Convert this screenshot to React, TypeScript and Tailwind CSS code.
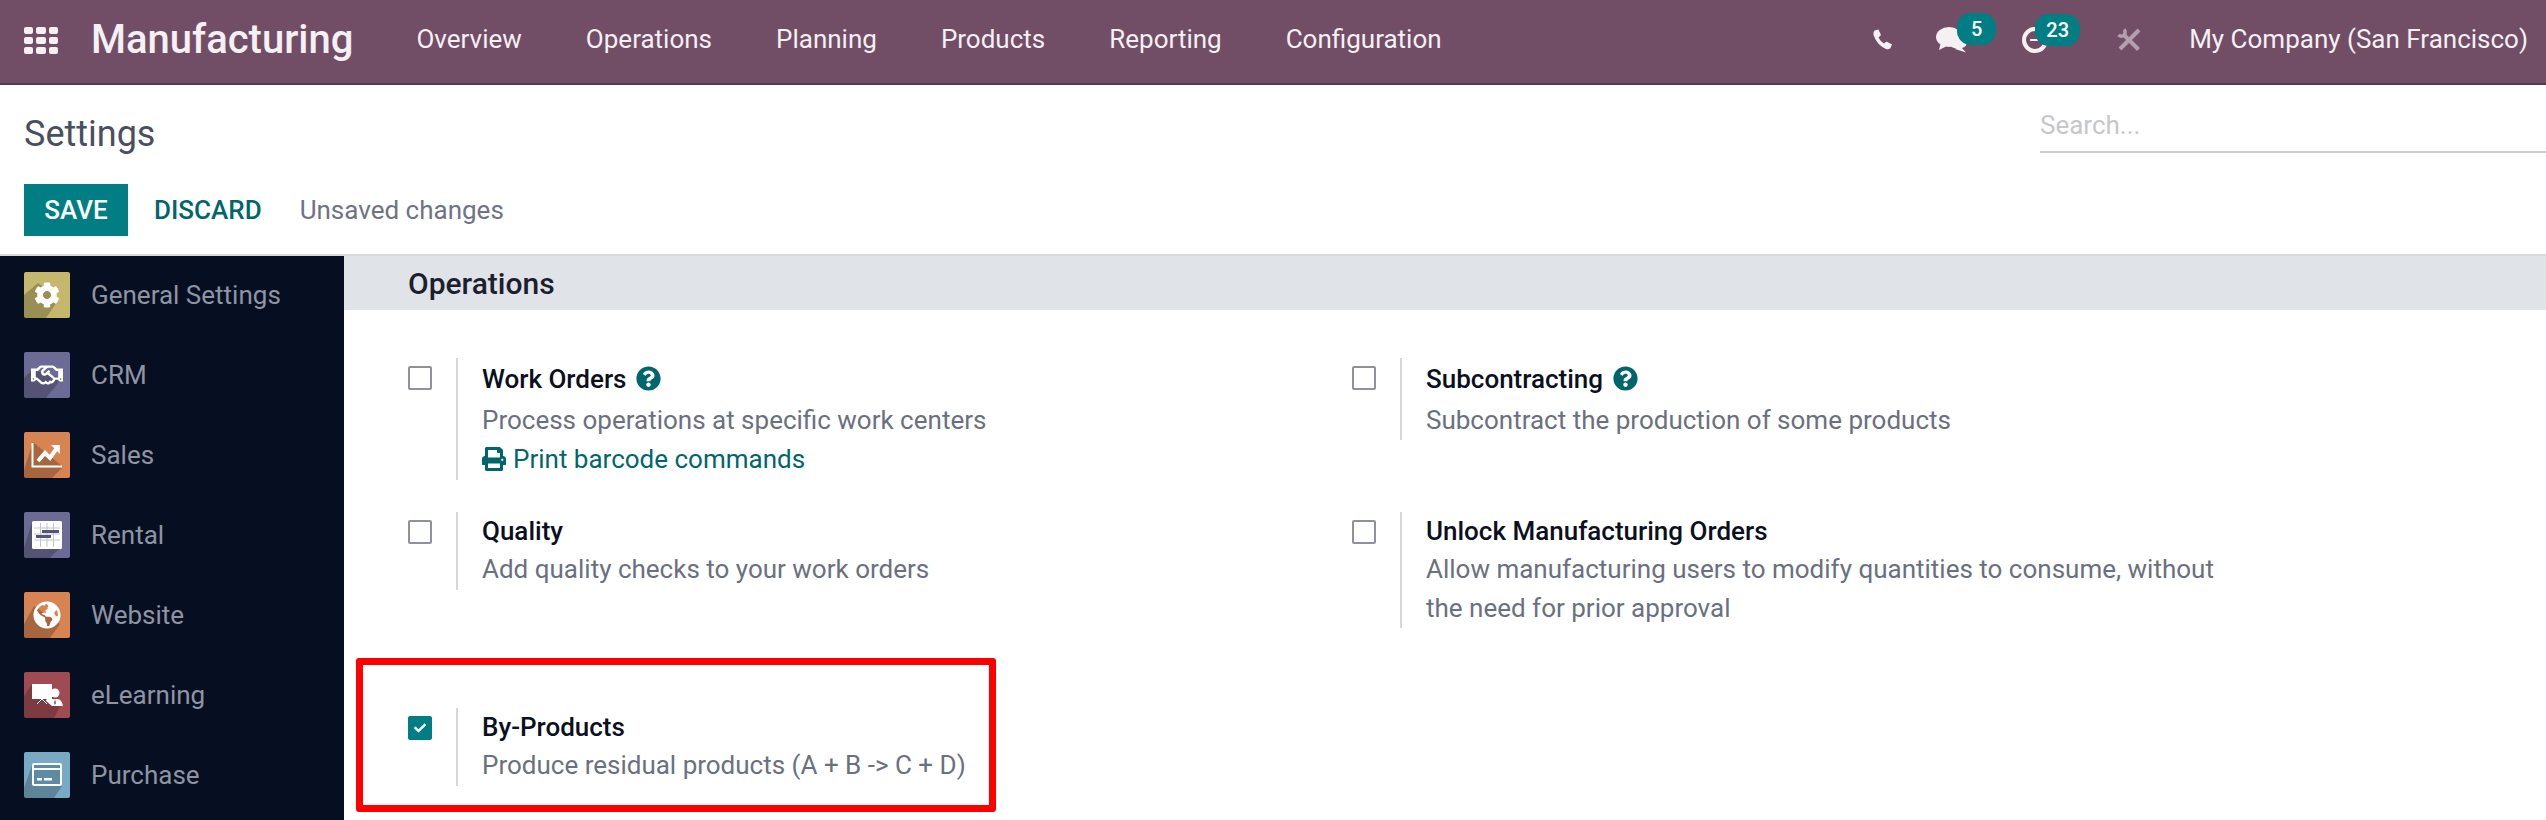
import React from 'react'
import { FaCog, FaRegHandshake, FaGlobeAmericas, FaPrint, FaQuestionCircle, FaCheck } from 'react-icons/fa'

const NAV_ITEMS = ['Overview', 'Operations', 'Planning', 'Products', 'Reporting', 'Configuration']

const AppIcon = ({ bg, shadow, children }: { bg: string; shadow: string; children: React.ReactNode }) => (
  <div className={`w-[46px] h-[46px] shrink-0 rounded-[2px] overflow-hidden ${bg}`}>
    <svg width="46" height="46" viewBox="0 0 46 46">
      <path d={shadow} fill="#000" opacity="0.22" />
      {children}
    </svg>
  </div>
)

const APPS: { name: string; bg: string; shadow: string; glyph: React.ReactNode }[] = [
  {
    name: 'General Settings',
    bg: 'bg-[#c5b76c]',
    shadow: 'M0 23 L14 11 L35 27 L22 46 L0 46 Z',
    glyph: <FaCog x={10} y={10} size={26} color="#fff" />,
  },
  {
    name: 'CRM',
    bg: 'bg-[#6c6b95]',
    shadow: 'M0 26 L8 18 L38 26 L22 46 L0 46 Z',
    glyph: <FaRegHandshake x={7} y={7} size={32} color="#fff" />,
  },
  {
    name: 'Sales',
    bg: 'bg-[#d88352]',
    shadow: 'M0 38 L9 10 L38 34 L38 36 L28 46 L0 46 Z',
    glyph: (
      <g>
        <path d="M8.5 11 V34.5 H38" fill="none" stroke="#fff" strokeWidth="2" />
        <path d="M14 29 L21 21 L26 26 L33 16" fill="none" stroke="#fff" strokeWidth="4" />
        <path d="M27 13 H36 V22 Z" fill="#fff" />
      </g>
    ),
  },
  {
    name: 'Rental',
    bg: 'bg-[#6c6b95]',
    shadow: 'M0 36 L8 10 L38 34 L26 46 L0 46 Z',
    glyph: (
      <g>
        <rect x="8" y="9" width="30" height="28" rx="1.5" fill="#fff" />
        <path d="M10 16 H36 M10 22 H36 M10 28 H36 M16.5 11 V35 M23 11 V35 M29.5 11 V35" stroke="#c3c3d2" strokeWidth="1" />
        <rect x="18" y="18" width="17" height="3" fill="#555478" />
        <rect x="12" y="23" width="15" height="3" fill="#555478" />
      </g>
    ),
  },
  {
    name: 'Website',
    bg: 'bg-[#d88352]',
    shadow: 'M0 32 L10 14 L36 32 L26 46 L0 46 Z',
    glyph: <FaGlobeAmericas x={9} y={9} size={28} color="#fff" />,
  },
  {
    name: 'eLearning',
    bg: 'bg-[#a04b52]',
    shadow: 'M0 24 L8 12 L38 30 L30 46 L0 46 Z',
    glyph: (
      <g>
        <rect x="8" y="12" width="20" height="15" fill="#fff" />
        <path d="M18 27 L13 32 M18 27 L23 32" stroke="#fff" strokeWidth="1" />
        <circle cx="31" cy="21" r="4.5" fill="#fff" />
        <path d="M23 26 L28 27 H34 Q38 28 39 34 H28 L22 29 Z" fill="#fff" />
        <path d="M31 27 L30 31 L31 33 L32 31 Z" fill="#a04b52" />
      </g>
    ),
  },
  {
    name: 'Purchase',
    bg: 'bg-[#78aac4]',
    shadow: 'M0 36 L8 13 L38 34 L30 46 L0 46 Z',
    glyph: (
      <g>
        <rect x="8" y="11" width="30" height="23" rx="2" fill="#fff" />
        <rect x="10" y="18" width="26" height="14" fill="#5f8aa3" />
        <rect x="10" y="13" width="26" height="3" fill="#5f8aa3" />
        <rect x="13" y="26" width="5" height="2.5" fill="#fff" />
        <rect x="20" y="26" width="8" height="2.5" fill="#fff" />
      </g>
    ),
  },
]

const PhoneIcon = () => (
  <svg width="21" height="21" viewBox="0 0 21 21" className="shrink-0" fill="#f4f0f3">
    <path d="M2.5 1.5 L6.5 0.5 L9 6 L6.5 8.5 Q8 12 12 14.5 L14.5 12.5 L20 15.5 L18.5 19 Q17 21 14 20 Q5 16 1.5 6 Q1 3 2.5 1.5 Z" />
  </svg>
)

const CommentsIcon = () => (
  <svg width="31" height="26" viewBox="0 0 31 26" fill="#f4f0f3">
    <ellipse cx="22" cy="17" rx="8.5" ry="4.5" />
    <path d="M24 19 L30 25.5 L19 22 Z" />
    <ellipse cx="13" cy="10" rx="13" ry="10" />
    <path d="M5 15 L3 23 L11 19 Z" />
  </svg>
)

const ToolsIcon = () => (
  <svg width="24" height="24" viewBox="0 0 24 24" fill="none" stroke="#f4f0f3" className="opacity-50">
    <path d="M7 1.5 A3.5 3.5 0 0 1 1.5 7" strokeWidth="3.5" />
    <path d="M7 7 L21.5 21.5" strokeWidth="4" />
    <path d="M22 2 L3 21" strokeWidth="4" />
  </svg>
)

const Help = () => <FaQuestionCircle className="inline-block text-[#01666b] text-[25px] ml-[10px] align-[-3px]" />

type SettingProps = {
  title: string
  help?: boolean
  checked?: boolean
  className?: string
  children: React.ReactNode
}

const Setting = ({ title, help, checked, className, children }: SettingProps) => (
  <div className="flex items-start">
    {checked ? (
      <div className="w-6 h-6 mt-2 shrink-0 rounded-[2px] bg-[#017e84] flex items-center justify-center">
        <FaCheck className="text-white text-[12px]" />
      </div>
    ) : (
      <div className="w-6 h-6 mt-2 shrink-0 rounded-[2px] border-2 border-[#8f929c] bg-white" />
    )}
    <div className={`ml-[24px] pl-6 border-l-2 border-[#d5d7db] ${className ?? ''}`}>
      <div className={`text-[26px] font-medium text-[#0b1020] ${help ? 'leading-[43px]' : 'leading-[38px]'}`}>
        {title}
        {help && <Help />}
      </div>
      <div className="text-[26px] leading-[39px] text-[#6b7080]">{children}</div>
    </div>
  </div>
)

export default function App() {
  return (
    <div className="relative w-[2546px] h-[820px] overflow-hidden bg-white flex flex-col font-['Roboto',sans-serif]">
      {/* Top bar */}
      <header className="h-[85px] shrink-0 bg-[#714d66] border-b-2 border-[#4f3b4b] flex items-center text-[#f4f0f3]">
        <div className="ml-6 -mt-[3px] w-[34px] h-[27px] grid grid-cols-3 gap-[3px]">
          {Array.from({ length: 9 }).map((_, i) => (
            <span key={i} className="bg-[#f4f0f3] rounded-[2px]" />
          ))}
        </div>
        <span className="ml-[33px] -mt-[3px] text-[40px] font-medium">Manufacturing</span>
        <nav className="ml-[63px] -mt-[4px] flex gap-[64px] text-[26px]">
          {NAV_ITEMS.map((item) => (
            <span key={item}>{item}</span>
          ))}
        </nav>
        <div className="ml-auto -mt-[4px] flex items-center pr-[18px]">
          <PhoneIcon />
          <div className="relative ml-[43px] w-[31px] h-[26px]">
            <CommentsIcon />
            <span className="absolute left-[21px] -top-[14px] w-[39px] h-[32px] rounded-[14px] bg-[#017e84] text-white text-[20px] font-medium flex items-center justify-center">
              5
            </span>
          </div>
          <div className="relative ml-[55px] w-[26px] h-[26px]">
            <div className="w-[26px] h-[26px] rounded-full border-[4px] border-[#f4f0f3]" />
            <div className="absolute left-[8px] top-[12px] w-[8px] h-[2px] bg-[#f4f0f3]" />
            <span className="absolute left-[13px] -top-[13px] w-[45px] h-[32px] rounded-[14px] bg-[#017e84] text-white text-[20px] font-medium flex items-center justify-center">
              23
            </span>
          </div>
          <div className="ml-[69px] h-6">
            <ToolsIcon />
          </div>
          <span className="ml-[48px] text-[26px]">My Company (San Francisco)</span>
        </div>
      </header>

      {/* Control panel */}
      <div className="h-[171px] shrink-0 border-b-2 border-[#d8dadd] relative pl-6">
        <div className="pt-[27px] text-[36px] leading-[44px] text-[#4a4f5f]">Settings</div>
        <div className="mt-[28px] flex items-center">
          <button className="w-[104px] h-[52px] bg-[#017e84] text-white text-[26px] font-medium">SAVE</button>
          <button className="ml-[26px] text-[26px] font-medium text-[#01666b]">DISCARD</button>
          <span className="ml-[38px] text-[26px] text-[#6f7383]">Unsaved changes</span>
        </div>
        <div className="absolute right-0 top-[20px] w-[506px] h-[48px] border-b-2 border-[#c9cbcf] flex items-center">
          <span className="-mt-[6px] text-[26px] text-[#c6c7c9]">Search...</span>
        </div>
      </div>

      <div className="flex flex-1 min-h-0">
        {/* Sidebar */}
        <aside className="w-[344px] shrink-0 bg-[#060f22] pt-4 pl-6 flex flex-col gap-[34px]">
          {APPS.map((app) => (
            <div key={app.name} className="flex items-center gap-[21px]">
              <AppIcon bg={app.bg} shadow={app.shadow}>
                {app.glyph}
              </AppIcon>
              <span className="text-[26px] text-[#8f94a2]">{app.name}</span>
            </div>
          ))}
        </aside>

        {/* Settings content */}
        <main className="flex-1 min-w-0">
          <div className="h-[54px] bg-[#e0e3e7] pl-16 flex items-center text-[30px] font-medium text-[#1b1f2e]">
            Operations
          </div>
          <div className="pl-16 pt-12 grid grid-cols-[944px_1fr] gap-y-8">
            <Setting title="Work Orders" help className="h-[122px]">
              Process operations at specific work centers
              <div className="text-[#01666b]">
                <FaPrint className="inline-block text-[24px] mr-[7px] align-[-3px]" />
                Print barcode commands
              </div>
            </Setting>
            <Setting title="Subcontracting" help className="h-[82px]">
              Subcontract the production of some products
            </Setting>
            <Setting title="Quality" className="h-[78px]">
              Add quality checks to your work orders
            </Setting>
            <Setting title="Unlock Manufacturing Orders" className="h-[116px] w-[830px]">
              Allow manufacturing users to modify quantities to consume, without the need for prior approval
            </Setting>
            <div className="mt-12">
              <Setting title="By-Products" checked className="h-[78px]">
                Produce residual products (A + B -&gt; C + D)
              </Setting>
            </div>
          </div>
        </main>
      </div>

      {/* Annotation over the By-Products option */}
      <div className="absolute left-[356px] top-[658px] w-[640px] h-[154px] border-[7px] border-[#ff0000] rounded-[3px]" />
    </div>
  )
}
